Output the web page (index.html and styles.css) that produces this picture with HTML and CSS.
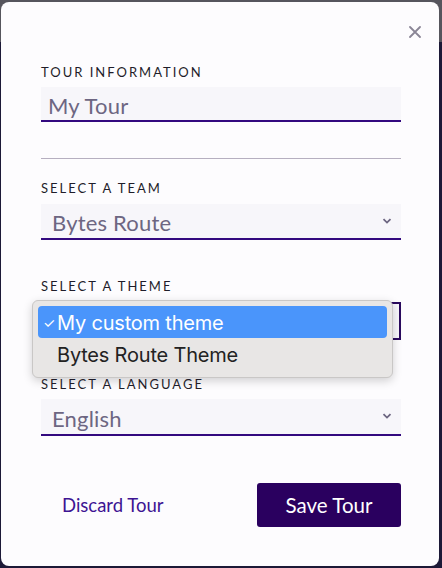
FILE: index.html
```html
<!DOCTYPE html>
<html lang="en">
<head>
    <meta charset="UTF-8">
    <meta name="viewport" content="width=device-width, initial-scale=1.0">
    <title>Tour Settings</title>
    <link rel="stylesheet" href="styles.css">
</head>
<body>

<div class="modal">
    <div class="modal-header">
        <button class="close-btn" aria-label="Close">
            <svg width="12" height="12" viewBox="0 0 12 12"><path d="M1 1L11 11M11 1L1 11" stroke="#8a8596" stroke-width="1.8" stroke-linecap="round"/></svg>
        </button>
    </div>

    <div class="field first">
        <label class="field-label">Tour information</label>
        <div class="input">My Tour</div>
    </div>

    <hr class="divider">

    <div class="field team">
        <label class="field-label">Select a team</label>
        <div class="select">
            <span>Bytes Route</span>
            <svg class="chevron" width="10" height="6" viewBox="0 0 10 6"><path d="M1.5 1.2L5 4.6L8.5 1.2" fill="none" stroke="#6c6580" stroke-width="1.8"/></svg>
        </div>
    </div>

    <div class="field theme">
        <label class="field-label">Select a theme</label>
        <!-- value hidden behind the open list -->
        <div class="select focused">
            <span></span>
            <svg class="chevron" width="10" height="6" viewBox="0 0 10 6"><path d="M1.5 1.2L5 4.6L8.5 1.2" fill="none" stroke="#333" stroke-width="1.8"/></svg>
        </div>
        <ul class="dropdown">
            <li class="option selected"><span class="check">&#10003;</span>My custom theme</li>
            <li class="option">Bytes Route Theme</li>
        </ul>
    </div>

    <div class="field language">
        <label class="field-label">Select a language</label>
        <div class="select">
            <span>English</span>
            <svg class="chevron" width="10" height="6" viewBox="0 0 10 6"><path d="M1.5 1.2L5 4.6L8.5 1.2" fill="none" stroke="#6c6580" stroke-width="1.8"/></svg>
        </div>
    </div>

    <div class="actions">
        <a class="discard" href="#">Discard Tour</a>
        <button class="save">Save Tour</button>
    </div>
</div>

</body>
</html>
```

FILE: styles.css
```css
body {
    margin: 0;
    padding: 0;
    height: 568px;
    overflow: hidden;
    font-family: Lato, "Open Sans", sans-serif;
    background: linear-gradient(#56555d 0, #56555d 42px, #1c1937 42px);
}
.modal {
    margin: 2px 3px 0 1px;
    height: 564px;
    box-sizing: border-box;
    padding: 0 38px 0 40px;
    background-color: #fdfcfe;
    border-radius: 8px;
}
.modal-header {
    height: 62px;
    display: flex;
    justify-content: flex-end;
    align-items: center;
    margin-right: -20px;
    padding-bottom: 2px;
    box-sizing: border-box;
}
.close-btn {
    border: none;
    background: none;
    padding: 0;
    width: 12px;
    height: 12px;
    display: flex;
    cursor: pointer;
}
.field {
    position: relative;
}
.field-label {
    display: block;
    height: 16px;
    line-height: 16px;
    font-size: 13px;
    letter-spacing: 2px;
    text-transform: uppercase;
    color: #1f1d2a;
}
.input, .select {
    box-sizing: border-box;
    background-color: #f7f6fa;
    border-bottom: 2px solid #33097f;
    color: #6d6682;
    font-size: 22px;
    letter-spacing: 0.2px;
    display: flex;
    align-items: center;
    padding-top: 3px;
}
.input {
    margin-top: 7px;
    height: 35px;
    padding-left: 7px;
}
.select {
    margin-top: 8px;
    height: 36px;
    padding-left: 11px;
    padding-right: 9px;
    justify-content: space-between;
}
.select .chevron {
    margin-top: -4px;
}
.select.focused {
    height: 38px;
    border: 2px solid #2a0a5e;
}
.divider {
    border: none;
    border-top: 1px solid #b6afc0;
    margin: 36px 0 0;
    height: 0;
}
.team {
    margin-top: 21px;
}
.theme {
    margin-top: 38px;
}
.language {
    margin-top: 36px;
}
.language .select {
    margin-top: 7px;
    height: 37px;
}
.dropdown {
    position: absolute;
    top: 22px;
    left: -9px;
    width: 361px;
    box-sizing: border-box;
    margin: 0;
    padding: 5px 5px 7px;
    list-style: none;
    background-color: #e8e6e5;
    border: 1px solid #c9c7c6;
    border-radius: 6px;
    box-shadow: 0 3px 10px rgba(0, 0, 0, 0.18);
    font-family: Inter, "Open Sans", sans-serif;
    font-size: 20px;
    color: #222;
}
.option {
    height: 32px;
    line-height: 34px;
    padding-left: 19px;
    border-radius: 4px;
    position: relative;
    letter-spacing: -0.2px;
}
.option.selected {
    background-color: #4a95fb;
    color: #fff;
}
.check {
    position: absolute;
    left: 5px;
    font-size: 14px;
}
.actions {
    margin-top: 47px;
    display: flex;
    justify-content: space-between;
    align-items: center;
}
.discard {
    margin-left: 21px;
    color: #3e1493;
    text-decoration: none;
    font-size: 18.5px;
}
.save {
    width: 144px;
    height: 44px;
    border: none;
    border-radius: 3px;
    background-color: #2a005f;
    color: #fff;
    font-family: Lato, sans-serif;
    font-size: 20.5px;
    cursor: pointer;
}
```
